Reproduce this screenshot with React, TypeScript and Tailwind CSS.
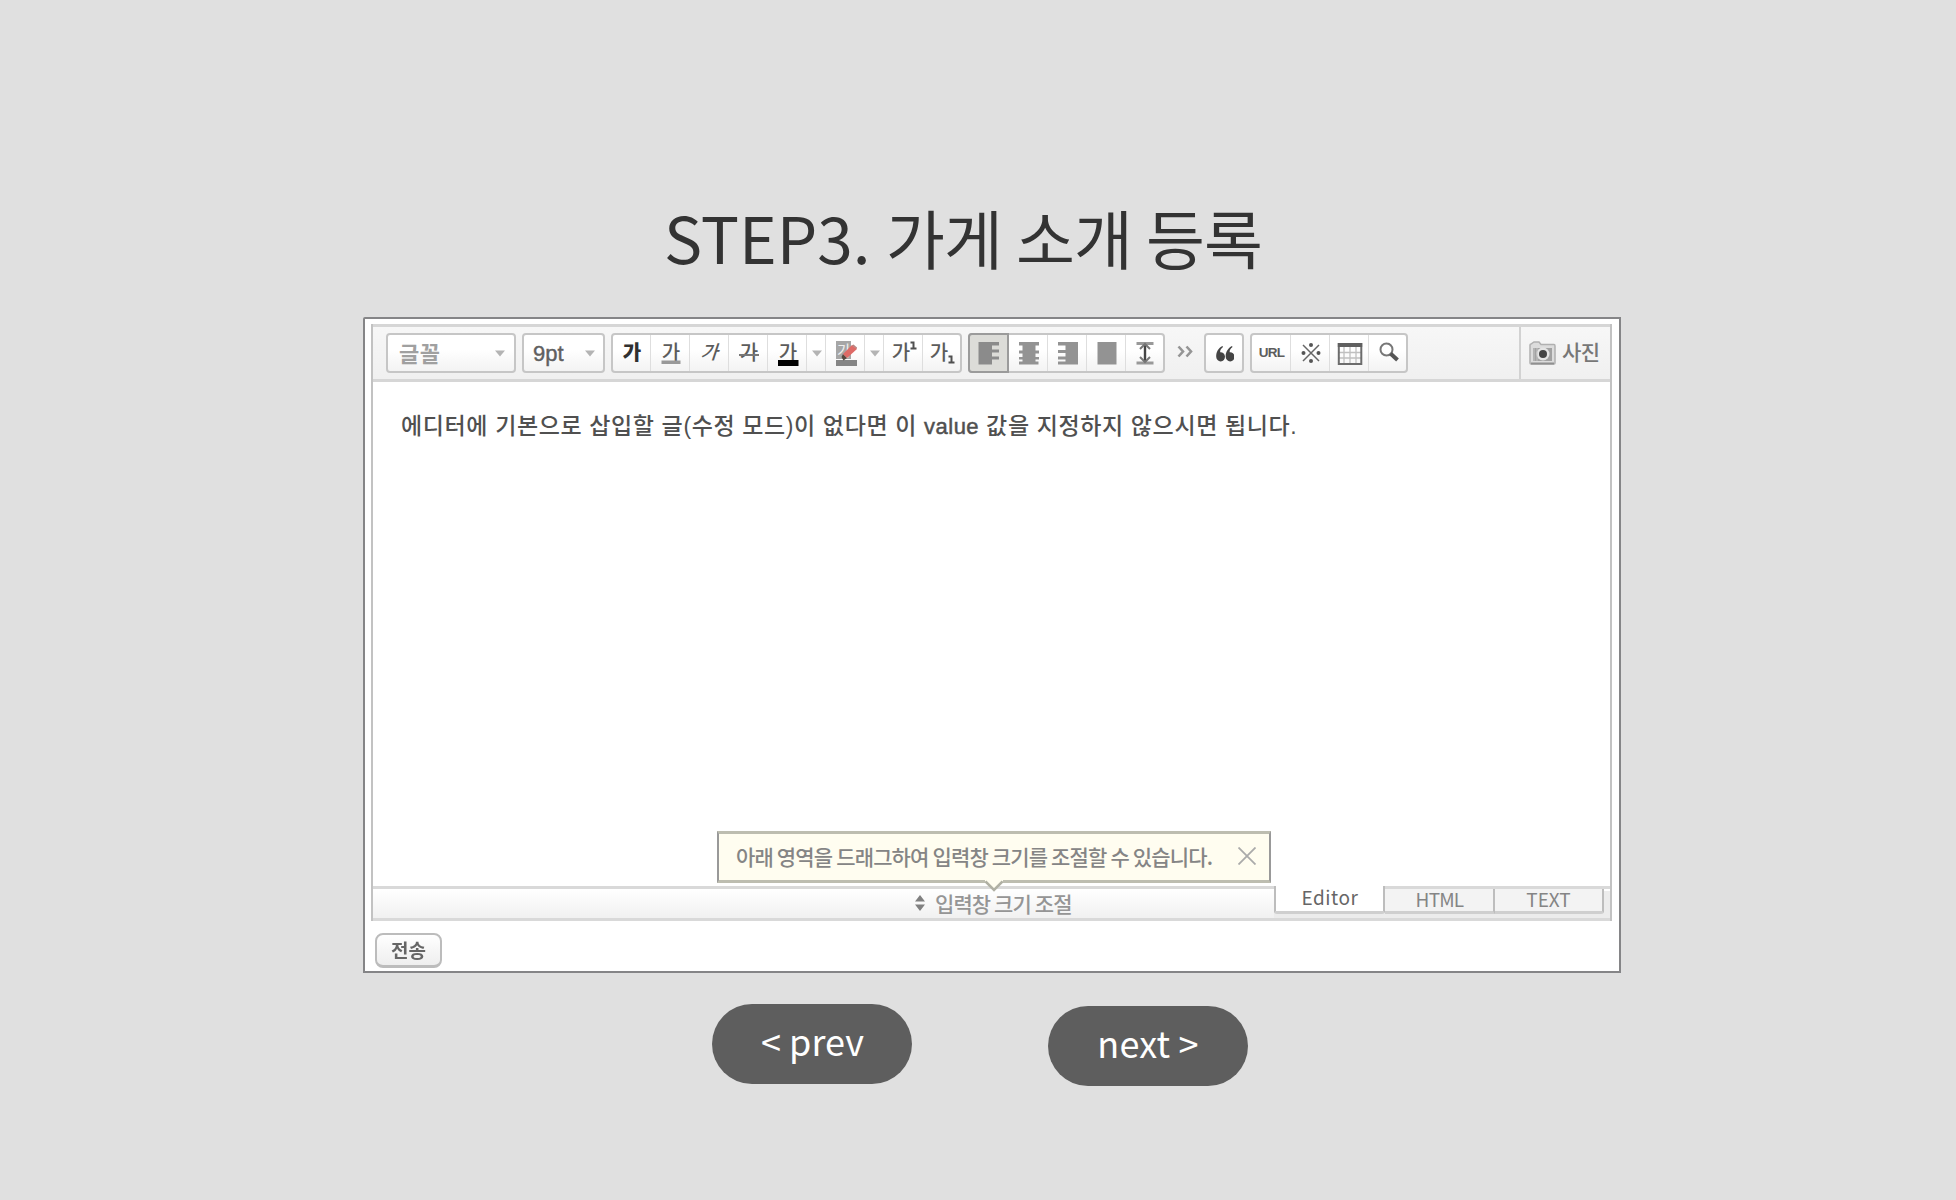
import React from "react";

const cjk = "font-['Liberation_Sans','Noto_Sans_CJK_KR',sans-serif]";
const noto = "font-['Noto_Sans_CJK_KR',sans-serif]";

function Caret() {
  return (
    <svg width="10" height="7" viewBox="0 0 10 7" className="shrink-0">
      <path d="M0 0.5H10L5 6.5Z" fill="#b4b4b4" />
    </svg>
  );
}

function Group({ children, className = "" }: { children: React.ReactNode; className?: string }) {
  return (
    <div
      className={
        "flex h-[40px] shrink-0 rounded-[4px] border-2 border-[#c6c6c6] bg-linear-to-b from-white from-40% to-[#f3f3f3] " +
        className
      }
    >
      {children}
    </div>
  );
}

function Cell({ children, className = "w-[39px]" }: { children: React.ReactNode; className?: string }) {
  return (
    <div
      className={
        "flex shrink-0 items-center justify-center border-r border-[#dedede] pl-px last:border-r-0 " + className
      }
    >
      {children}
    </div>
  );
}

function Ga({
  children,
  bold = false,
  x = 15,
}: {
  children?: React.ReactNode;
  bold?: boolean;
  x?: number;
}) {
  return (
    <svg width="30" height="30" viewBox="0 0 30 30" className={"overflow-visible " + noto}>
      <text
        x={x}
        y="21.5"
        textAnchor="middle"
        fontSize="20"
        fontWeight={bold ? 900 : 500}
        fill={bold ? "#303030" : "#5c5c5c"}
      >
        가
      </text>
      {children}
    </svg>
  );
}

function Toolbar() {
  return (
    <div className="flex h-[58px] items-start border-y-[3px] border-[#d6d6d6] bg-linear-to-b from-[#f7f7f7] to-[#f0f0f0] pl-[13px]">
      <Group className="mt-[6px] w-[130px] items-center justify-between pr-[9px] pl-[11px]">
        <span className={"-mt-[2px] text-[22px] leading-[36px] font-bold tracking-[0.5px] text-[#a0a0a0] " + noto}>
          글꼴
        </span>
        <Caret />
      </Group>
      <Group className="mt-[6px] ml-[6px] w-[83px] items-center justify-between pr-[8px] pl-[9px]">
        <span
          className={
            "mt-[2px] text-[22px] leading-[34px] text-[#606060] [-webkit-text-stroke:0.4px_#606060] " + cjk
          }
        >
          9pt
        </span>
        <Caret />
      </Group>
      <Group className="mt-[6px] ml-[6px] w-[351px]">
        <Cell className="w-[38px]">
          <Ga bold />
        </Cell>
        <Cell>
          <Ga>
            <rect x="5.5" y="22.5" width="19" height="3.5" fill="#999" />
          </Ga>
        </Cell>
        <Cell>
          <svg width="30" height="30" viewBox="0 0 30 30" className={"overflow-visible " + noto}>
            <text
              x="20.5"
              y="21"
              textAnchor="middle"
              fontSize="19"
              fontWeight="500"
              fill="#5c5c5c"
              transform="skewX(-18)"
            >
              가
            </text>
          </svg>
        </Cell>
        <Cell>
          <Ga>
            <rect x="5" y="16" width="20" height="2" fill="#777" />
          </Ga>
        </Cell>
        <Cell>
          <Ga>
            <rect x="5" y="22" width="20.5" height="6" fill="#000" />
          </Ga>
        </Cell>
        <Cell className="w-[19px]">
          <Caret />
        </Cell>
        <Cell>
          <svg width="30" height="30" viewBox="0 0 30 30" className={"overflow-visible " + noto}>
            <rect x="5" y="3" width="15" height="18" fill="#a6a6a6" />
            <text x="13" y="18" textAnchor="middle" fontSize="15" fill="#eee">
              가
            </text>
            <rect x="5" y="22" width="21" height="6" fill="#858585" />
            <path d="M12 16L16 20L12.5 22.5L10.5 19Z" fill="#554840" />
            <path d="M12 16L21 7L26 11L16 20Z" fill="#de6a66" />
            <path d="M20.5 7.5L22.5 6.5L26 9.5V11Z" fill="#b98481" />
          </svg>
        </Cell>
        <Cell className="w-[19px]">
          <Caret />
        </Cell>
        <Cell>
          <Ga x={12}>
            <path d="M21.5 4.5H24.5V9.5M21.5 10.5H27.5" stroke="#505050" strokeWidth="2" fill="none" />
          </Ga>
        </Cell>
        <Cell className="w-[37px]">
          <Ga x={12}>
            <path d="M21.5 18.5H24.5V23.5M21.5 24.5H27.5" stroke="#505050" strokeWidth="2" fill="none" />
          </Ga>
        </Cell>
      </Group>
      <Group className="mt-[6px] ml-[6px] w-[197px]">
        <div className="-mt-[2px] -ml-[2px] flex h-[40px] w-[41px] shrink-0 items-center justify-center rounded-l-[4px] border-2 border-[#9b9b9b] bg-[#dcdcd8] pl-px">
          <svg width="22" height="24" viewBox="0 0 22 24">
            <path d="M0.5 1H21V4.5H14V8.5H21V11.5H14V15.5H21V18.5H14V23.5H0.5Z" fill="#8b8b8b" />
          </svg>
        </div>
        <Cell>
          <svg width="22" height="24" viewBox="0 0 22 24">
            <path
              d="M1 1H21V4.5H17.5V9.5H21V12.5H17.5V16H21V18.5H17.5V20.5H20.5V23.5H1V20.5H4.5V18.5H1V16H4.5V12.5H1V9.5H4.5V4.5H1Z"
              fill="#939393"
            />
          </svg>
        </Cell>
        <Cell>
          <svg width="22" height="24" viewBox="0 0 22 24">
            <path d="M21 1H1V4.5H8.5V9H1V12H8.5V15.5H1V18.5H8.5V20.5H1V23.5H21Z" fill="#939393" />
          </svg>
        </Cell>
        <Cell>
          <svg width="22" height="24" viewBox="0 0 22 24">
            <rect x="1.5" y="1" width="19" height="22.5" fill="#939393" />
          </svg>
        </Cell>
        <Cell className="w-[37px]">
          <svg width="20" height="26" viewBox="0 0 20 26" fill="none">
            <path d="M1.5 3.5H18.5M1.5 23H18.5" stroke="#999" strokeWidth="3" />
            <path d="M10 4V22" stroke="#444" strokeWidth="2.4" />
            <path d="M5 9L10 4L15 9M5 17L10 22L15 17" stroke="#777" strokeWidth="2" />
          </svg>
        </Cell>
      </Group>
      <svg width="16" height="14" viewBox="0 0 16 14" fill="none" className="mt-[18px] ml-[12px] shrink-0">
        <path d="M1.5 1.5L6 6.5L1.5 11.5M9.5 1.5L14 6.5L9.5 11.5" stroke="#959595" strokeWidth="2.6" />
      </svg>
      <Group className="mt-[6px] ml-[11px] w-[40px]">
        <Cell className="w-[36px]">
          <svg width="18" height="16" viewBox="0 0 18 16" fill="#444" className="mt-[1px]">
            <path d="M7 1C4.5 3 4 4.5 4.2 6.2A4.4 4.6 0 1 1 0.2 10.8C0 6 2.5 2 6.5 0Z" />
            <path d="M16.5 1C14 3 13.5 4.5 13.7 6.2A4.4 4.6 0 1 1 9.7 10.8C9.5 6 12 2 16 0Z" />
          </svg>
        </Cell>
      </Group>
      <Group className="mt-[6px] ml-[6px] w-[158px]">
        <Cell>
          <span className="font-['Liberation_Sans',sans-serif] text-[13.5px] leading-none font-bold tracking-[-0.8px] text-[#5c5c5c]">
            URL
          </span>
        </Cell>
        <Cell>
          <svg width="20" height="20" viewBox="0 0 20 20">
            <path d="M2 2L18 18M18 2L2 18" stroke="#666" strokeWidth="1.5" />
            <g fill="#555">
              <circle cx="10" cy="2" r="2" />
              <circle cx="10" cy="18" r="2" />
              <circle cx="2.5" cy="10" r="2" />
              <circle cx="17.5" cy="10" r="2" />
            </g>
          </svg>
        </Cell>
        <Cell>
          <svg width="26" height="24" viewBox="0 0 26 24" className="mt-[1px]">
            <path d="M7 5V21M13 5V21M19 5V21M2 10.5H24M2 16H24" stroke="#c0c0c0" strokeWidth="1.3" />
            <rect x="1.8" y="2" width="22.5" height="20" fill="none" stroke="#6c6c6c" strokeWidth="2" />
            <rect x="0.8" y="1" width="24.4" height="4" fill="#606060" />
          </svg>
        </Cell>
        <Cell className="w-[37px]">
          <svg width="22" height="22" viewBox="0 0 22 22" fill="none" className="mb-[2px] ml-[2px]">
            <circle cx="8.5" cy="8.5" r="6" stroke="#777" strokeWidth="2" />
            <path d="M12.5 12.5L19.5 19" stroke="#555" strokeWidth="4" />
          </svg>
        </Cell>
      </Group>
      <div className="ml-auto flex h-[52px] w-[91px] items-center border-l-2 border-[#d2d2d2] pl-[8px]">
        <svg width="27" height="24" viewBox="0 0 27 24" className="mb-[1px] shrink-0">
          <path
            d="M1 4Q1 3 2 3L5 1H10L12 3.5H25Q26 3.5 26 5V22Q26 23 25 23H2Q1 23 1 22Z"
            fill="#dcdcdc"
            stroke="#b0b0b0"
            strokeWidth="1.5"
          />
          <rect x="4" y="7" width="19" height="13" fill="#a2a2a2" />
          <circle cx="14" cy="13" r="6.5" fill="#e4e4e4" />
          <circle cx="14" cy="13" r="4" fill="#444" />
          <path d="M5 7V20M8 7V20" stroke="#c4c4c4" strokeWidth="1" />
          <path d="M2 22.5H25" stroke="#909090" strokeWidth="2" />
        </svg>
        <span
          className={"mb-[4px] ml-[6px] text-[21px] leading-[30px] font-medium tracking-[-0.5px] text-[#777] " + noto}
        >
          사진
        </span>
      </div>
    </div>
  );
}

function Tooltip() {
  return (
    <div className="absolute bottom-[38px] left-[344px] flex h-[52px] w-[554px] items-center justify-between border-x-2 border-y-[3px] border-x-[#999] border-y-[#bdbdb0] bg-[#fffdf0] pr-[13px] pl-[17px]">
      <span
        className={
          "mb-[2px] text-[21px] leading-[30px] font-medium tracking-[-0.84px] whitespace-nowrap text-[#858585] " +
          noto
        }
      >
        아래 영역을 드래그하여 입력창 크기를 조절할 수 있습니다.
      </span>
      <svg width="18" height="18" viewBox="0 0 18 18" className="mb-[2px]">
        <path d="M0.5 0.5L17.5 17.5M17.5 0.5L0.5 17.5" stroke="#aaa" strokeWidth="1.8" />
      </svg>
      <svg width="18" height="12" viewBox="0 0 18 12" className="absolute top-[46px] left-[266px]">
        <path d="M0 0H18V1L9 10L0 1Z" fill="#fffdf0" />
        <path d="M0.5 1.5L9 10L17.5 1.5" fill="none" stroke="#b0b0a4" strokeWidth="2.5" />
      </svg>
    </div>
  );
}

function StatusBar() {
  return (
    <div className="flex h-[35px] border-y-[3px] border-[#d9d9d9] bg-linear-to-b from-white to-[#f1f1f1]">
      <div className="flex w-[902px] items-center pb-[2px] pl-[542px]">
        <svg width="10" height="16" viewBox="0 0 10 16" fill="#808080">
          <path d="M5 0L10 6.5H0ZM5 16L0 9.5H10Z" />
        </svg>
        <span
          className={
            "ml-[10px] text-[21px] leading-[28px] font-medium tracking-[-0.9px] whitespace-nowrap text-[#959595] " +
            noto
          }
        >
          입력창 크기 조절
        </span>
      </div>
      <div className="flex h-[29px] w-[336px] bg-[#ececec] font-['Noto_Sans_CJK_KR',sans-serif] text-[19px] leading-[20px] text-[#858585]">
        <div className="-mt-[3px] h-[28px] w-[111px] rounded-b-[3px] border-x-2 border-b-[3px] border-x-[#bdbdbd] border-b-[#cfcfcf] bg-white pt-px text-center tracking-[0.5px] text-[#666]">
          Editor
        </div>
        <div className="h-[25px] w-[110px] border-r-2 border-b-[3px] border-r-[#bdbdbd] border-b-[#cfcfcf] bg-[#f3f3f3] text-center tracking-[-0.8px]">
          HTML
        </div>
        <div className="h-[25px] w-[109px] rounded-br-[3px] border-r-2 border-b-[3px] border-r-[#bdbdbd] border-b-[#cfcfcf] bg-[#f3f3f3] pr-px text-center">
          TEXT
        </div>
        <div className="h-[2px] flex-1 bg-white" />
      </div>
    </div>
  );
}

export default function App() {
  return (
    <main className="flex h-[1200px] w-[1956px] flex-col overflow-hidden bg-[#e0e0e0]">
      <h1
        className={
          "mt-[188px] ml-[664px] h-[96px] text-[64px] leading-[96px] font-normal whitespace-nowrap text-[#333] " + noto
        }
      >
        STEP3. <span className="ml-[1px] tracking-[-0.7px]">가게 소개 등록</span>
      </h1>
      <section className="mt-[33px] ml-[363px] h-[656px] w-[1258px] rounded-tl-[2px] border-2 border-[#858587] bg-white">
        <div className="flex h-full flex-col items-start pt-[5px] pl-[6px] blur-[0.6px]">
          <div className="relative w-[1241px] border-x-2 border-[#c2c2c2]">
            <Toolbar />
            <div className="h-[504px] bg-white pt-[28px] pl-[28px]">
              <p
                className={
                  "text-[23px] leading-[32px] font-medium tracking-[0.62px] whitespace-nowrap text-[#505050] " + cjk
                }
              >
                에디터에 기본으로 삽입할 글(수정 모드)이 없다면 이{" "}
                <span className="text-[22px] tracking-[0.5px] [-webkit-text-stroke:0.5px_#505050]">value</span> 값을
                지정하지 않으시면 됩니다.
              </p>
            </div>
            <StatusBar />
            <Tooltip />
          </div>
          <button
            className={
              "mt-[12px] ml-[4px] h-[35px] w-[67px] rounded-[8px] border-2 border-b-[3px] border-[#bcbcbc] bg-linear-to-b from-white to-[#eeeeee] pb-px text-[19px] leading-[28px] font-bold text-[#666] " +
              noto
            }
          >
            전송
          </button>
        </div>
      </section>
      <nav className={"mt-[31px] ml-[712px] flex gap-[136px] text-[36px] leading-[72px] text-white " + noto}>
        <button className="h-[80px] w-[200px] rounded-[40px] bg-[#5e5e5e] pb-[8px] pl-px">&lt; prev</button>
        <button className="mt-[2px] h-[80px] w-[200px] rounded-[40px] bg-[#5e5e5e] pb-[8px] tracking-[0.2px]">
          next &gt;
        </button>
      </nav>
    </main>
  );
}
